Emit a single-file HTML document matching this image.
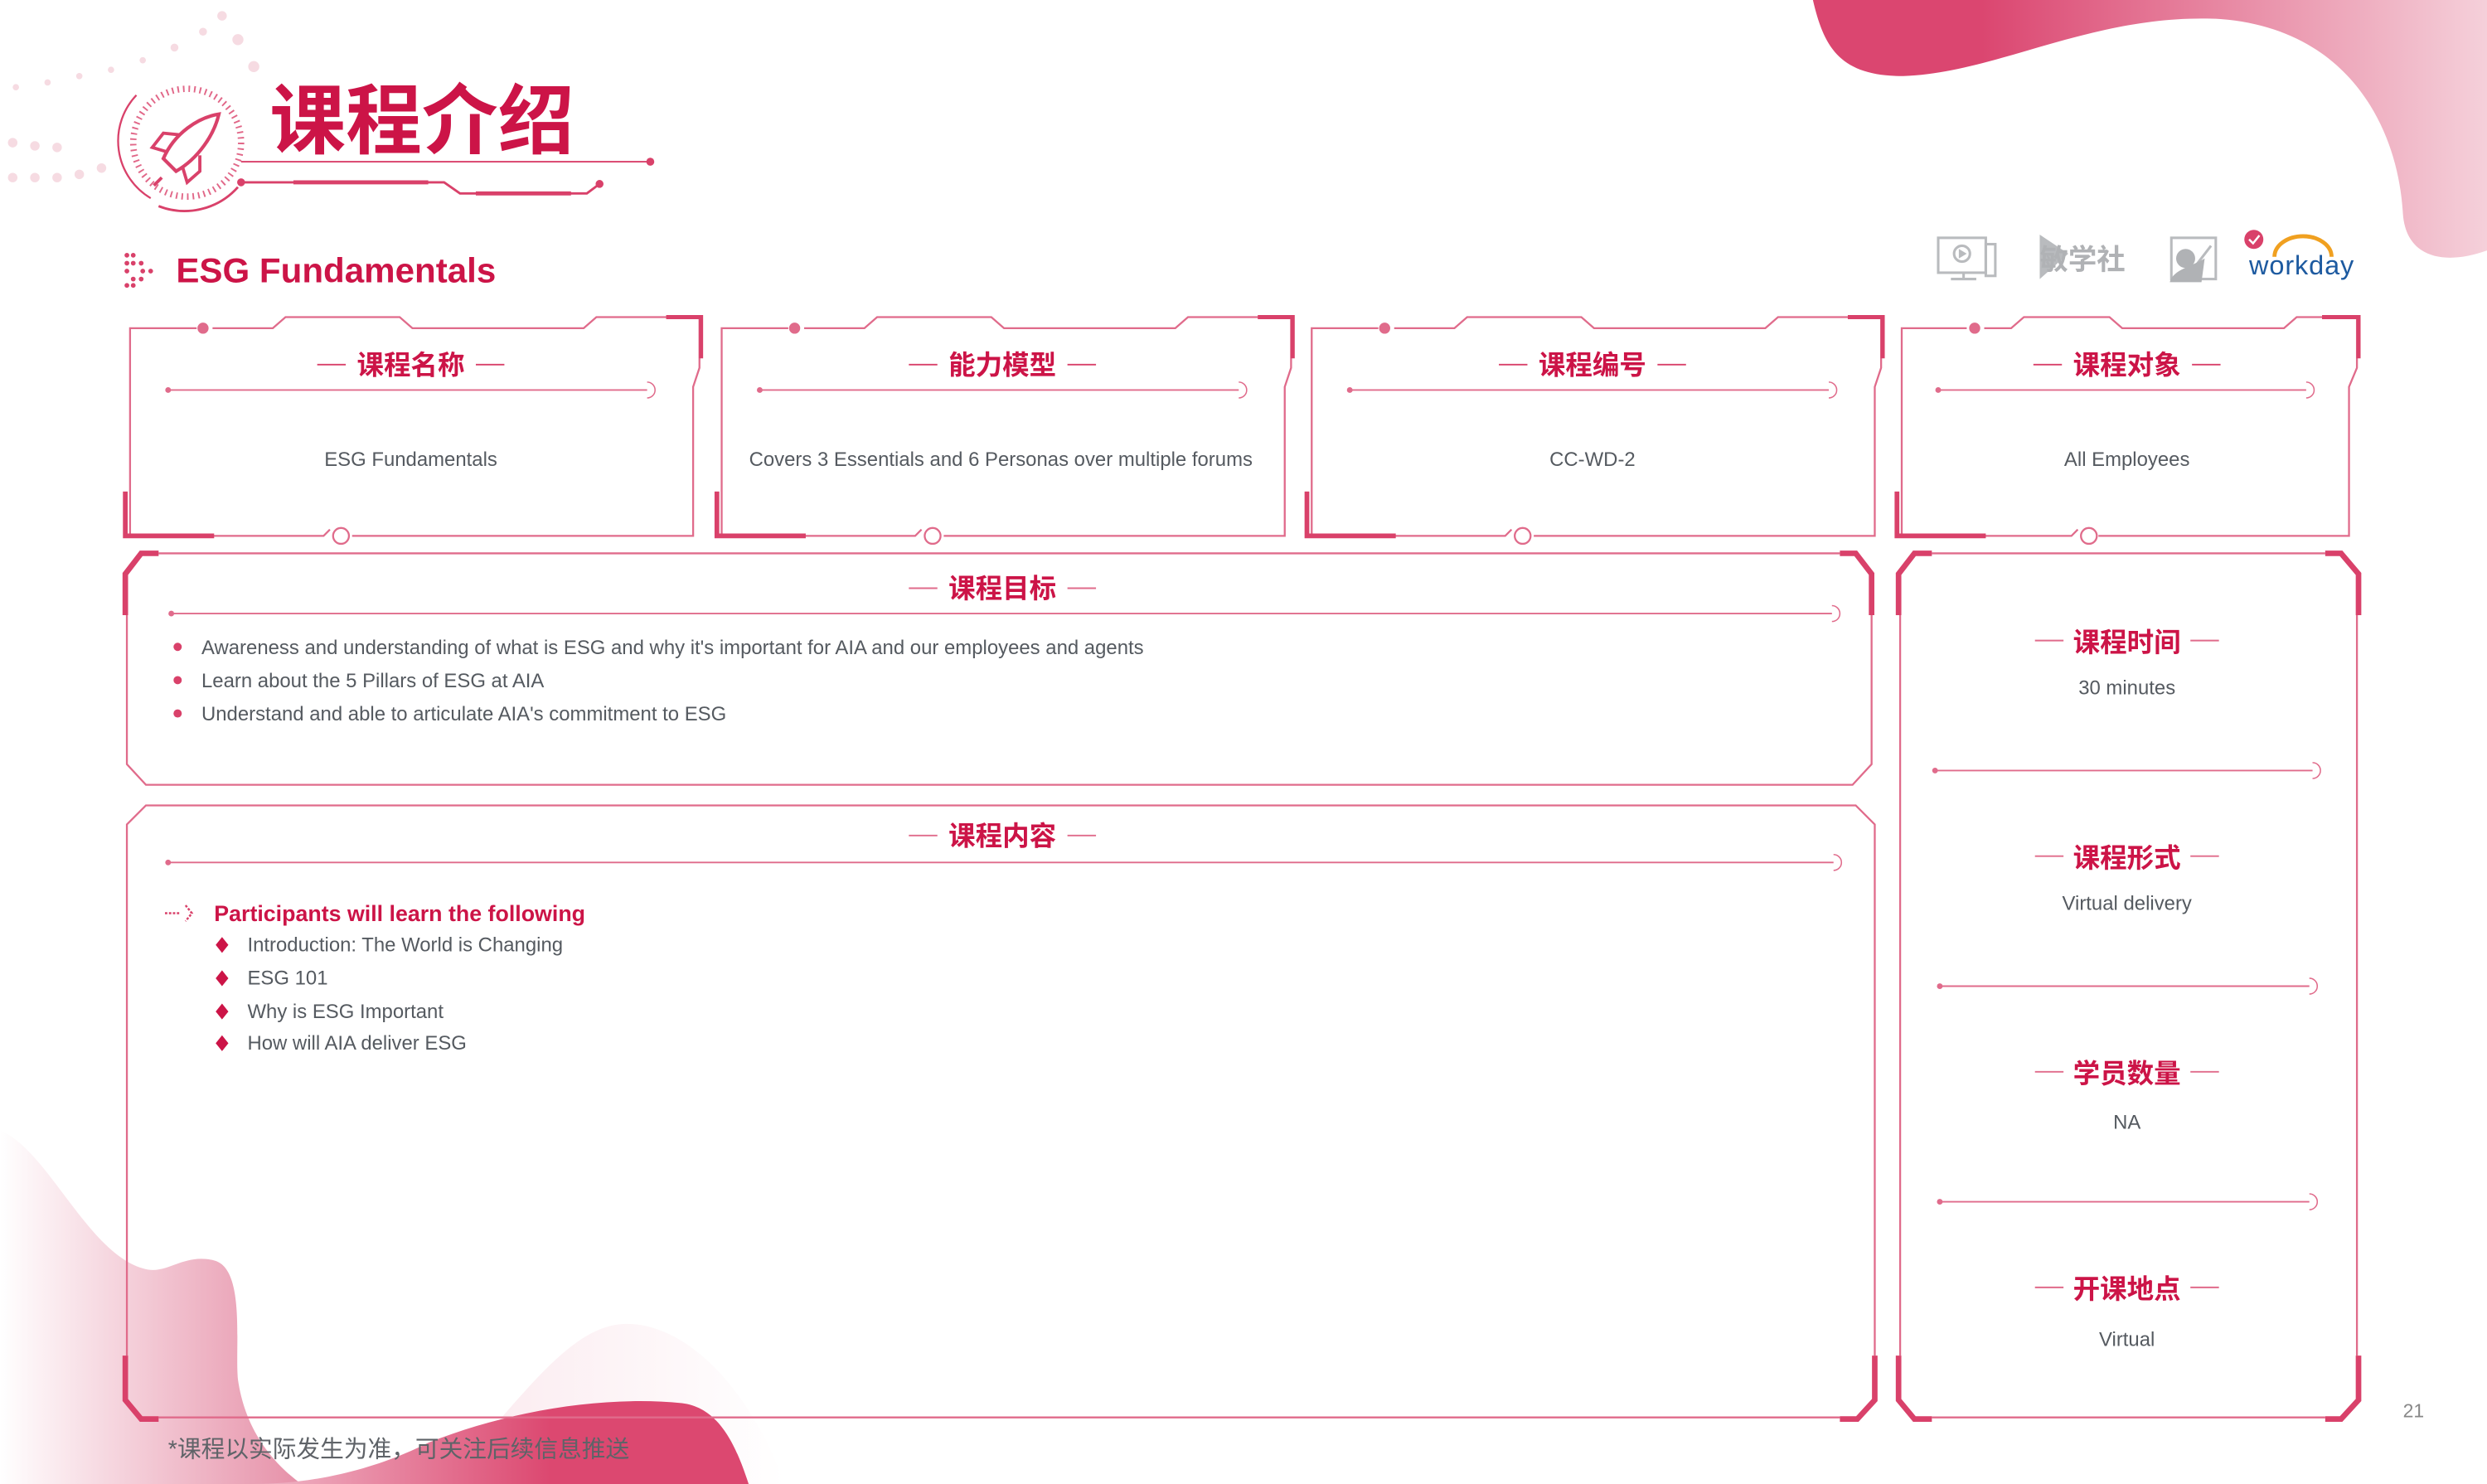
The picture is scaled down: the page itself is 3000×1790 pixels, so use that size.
<!DOCTYPE html>
<html><head><meta charset="utf-8"><style>
html,body{margin:0;padding:0;background:#fff;}
svg{display:block}
.cn{font-family:"Liberation Sans","Noto Sans CJK SC",sans-serif;font-weight:bold;fill:#cc1447}
.tx{font-family:"Liberation Sans","Noto Sans CJK SC",sans-serif;fill:#555a60}
</style></head><body>
<svg width="3000" height="1790" viewBox="0 0 1568 936" preserveAspectRatio="none" xmlns="http://www.w3.org/2000/svg">
<defs>
<linearGradient id="gtr" x1="0" x2="1" y1="0" y2="0"><stop offset="0.25" stop-color="#db4670"/><stop offset="1" stop-color="#f5d0da"/></linearGradient>
<linearGradient id="gbl" x1="0" x2="1" y1="0" y2="0"><stop offset="0" stop-color="#fff"/><stop offset="1" stop-color="#e690a8"/></linearGradient>
<linearGradient id="gbr" x1="0" x2="1" y1="0" y2="0"><stop offset="0" stop-color="#f0b8c8"/><stop offset="0.6" stop-color="#dc4870"/></linearGradient>
<linearGradient id="gfaint" x1="0" x2="1"><stop offset="0" stop-color="#fbe9ee"/><stop offset="1" stop-color="#fff"/></linearGradient>
</defs>
<path d="M1143,0 C1150,30 1160,48 1200,48 C1260,46 1320,8 1400,12 C1480,18 1512,80 1515,135 C1517,162 1540,168 1568,158 L1568,0 Z" fill="url(#gtr)"/>
<path d="M280,936 C330,880 360,835 395,835 C430,835 470,870 495,936 Z" fill="url(#gfaint)"/>
<path d="M0,713 C30,725 55,790 90,800 C105,805 115,790 135,795 C155,800 148,850 150,870 C155,905 175,925 190,936 L0,936 Z" fill="url(#gbl)"/>
<path d="M160,936 C190,936 230,930 270,910 C320,890 380,880 430,885 C455,888 465,915 472,936 Z" fill="url(#gbr)"/>
<g fill="#f6dbe2">
<circle cx="140" cy="10" r="3"/><circle cx="150" cy="25" r="3.5"/><circle cx="160" cy="42" r="3.5"/><circle cx="128" cy="20" r="2.5"/><circle cx="110" cy="30" r="2.5"/><circle cx="90" cy="38" r="2"/><circle cx="70" cy="44" r="2"/><circle cx="50" cy="48" r="2"/><circle cx="30" cy="52" r="2"/><circle cx="10" cy="55" r="2"/><circle cx="8" cy="90" r="3"/><circle cx="22" cy="92" r="3"/><circle cx="36" cy="93" r="3"/><circle cx="8" cy="112" r="3"/><circle cx="22" cy="112" r="3"/><circle cx="36" cy="112" r="3"/><circle cx="50" cy="110" r="3"/><circle cx="64" cy="106" r="3"/>
</g>
<g fill="none" stroke="#d9416a">
<circle cx="118" cy="90" r="34" stroke-width="4" stroke-dasharray="1 2.5" opacity="0.8"/>
<path d="M95,125 A42,42 0 0 1 86,60" stroke-width="1.2"/>
<path d="M100,130 A45,45 0 0 0 150,118" stroke-width="1.5"/>
<path d="M103,100 L111,108 C125,100 135,85 138,72 C125,74 110,84 103,100 Z" stroke-width="2.2"/>
<path d="M106,96 L96,93 L103,84 L113,85" stroke-width="2"/>
<path d="M115,105 L118,115 L126,108 L126,98" stroke-width="2"/>
<path d="M102,112 L97,117" stroke-width="2"/>
</g>
<text x="170" y="93" class="cn" font-size="48">课程介绍</text>
<path d="M152,102 L410,102" stroke="#d9416a" stroke-width="1" fill="none"/><circle cx="410" cy="102" r="2.5" fill="#d9416a"/>
<path d="M152,115 L280,115 L290,122 L370,122 L378,116" stroke="#d9416a" stroke-width="1.5" fill="none"/><circle cx="152" cy="115" r="2.5" fill="#d9416a"/><circle cx="378" cy="116" r="2.5" fill="#d9416a"/>
<path d="M185,115 L270,115 M300,122 L360,122" stroke="#d9416a" stroke-width="2.5"/>
<g fill="#d9416a"><circle cx="80" cy="161" r="1.5"/><circle cx="84" cy="161" r="1.5"/><circle cx="84" cy="166" r="1.5"/><circle cx="89" cy="166" r="1.5"/><circle cx="90" cy="171" r="1.5"/><circle cx="95" cy="171" r="1.5"/><circle cx="84" cy="176" r="1.5"/><circle cx="89" cy="176" r="1.5"/><circle cx="80" cy="180" r="1.5"/><circle cx="84" cy="180" r="1.5"/><circle cx="80" cy="171" r="1.5"/><circle cx="80" cy="166" r="1.5"/></g>
<text x="111" y="178" class="cn" font-size="22">ESG Fundamentals</text>
<g fill="none" stroke="#b9bbbe" stroke-width="1.6">
<rect x="1222" y="150" width="30" height="22"/><rect x="1252" y="154" width="6" height="20"/><circle cx="1237" cy="160" r="5"/><path d="M1230,176 L1246,176 M1238,172 L1238,176"/>
<rect x="1369" y="150" width="28" height="26"/><path d="M1384,168 L1394,155"/>
</g>
<path d="M1235,157 L1240,160 L1235,163 Z" fill="#b9bbbe"/>
<path d="M1286,148 L1304,160 L1286,176 Z" fill="#b9bbbe"/>
<text x="1286" y="170" font-family="Liberation Sans,Noto Sans CJK SC,sans-serif" font-weight="bold" font-size="18" fill="#b0b2b5">敏学社</text>
<circle cx="1378" cy="163" r="6" fill="#b0b2b5"/><path d="M1368,178 C1370,170 1382,168 1390,163 L1388,178 Z" fill="#b0b2b5"/>
<circle cx="1421" cy="151" r="6" fill="#d9416a"/><path d="M1418,151 L1420.5,153.5 L1424.5,148.5" stroke="#fff" stroke-width="1.3" fill="none"/>
<path d="M1434,162 A18,13 0 0 1 1470,162" stroke="#f0a020" stroke-width="2.5" fill="none"/>
<text x="1418" y="173" font-family="Liberation Sans,sans-serif" font-size="17" fill="#1d5aa0" textLength="66">workday</text>
<g id="card">
<path d="M82,338 L82,207 L124,207 M134,207 L172,207 L180,200 L252,200 L260,207 L368,207 L376,200 L441,200 L441,232 L437,244 L437,338 L222,338 M208,334 L204,338 L82,338" fill="none" stroke="#e06b8b" stroke-width="1.2"/>
<circle cx="128" cy="207" r="3.5" fill="#e06b8b"/>
<circle cx="215" cy="338" r="5" fill="#fff" stroke="#e06b8b" stroke-width="1.2"/>
<path d="M79,310 L79,338 L135,338" fill="none" stroke="#d9416a" stroke-width="3"/>
<path d="M420,200 L442,200 L442,226" fill="none" stroke="#d9416a" stroke-width="2.6"/>
<path d="M200,230 L218,230 M300,230 L318,230" stroke="#d9416a" stroke-width="1"/>
<path d="M106,246 L408,246" stroke="#e06b8b" stroke-width="1"/><circle cx="106" cy="246" r="1.8" fill="#e06b8b"/>
<path d="M408,241 A5,5 0 1 1 408,251" fill="none" stroke="#e06b8b" stroke-width="0.8"/>
</g>
<use href="#card" x="373"/><use href="#card" x="745"/>
<!-- card 4 (narrower) -->
<g>
<path d="M1199,338 L1199,207 L1240,207 M1251,207 L1268,207 L1276,200 L1330,200 L1338,207 L1440,207 L1448,200 L1486,200 L1486,232 L1481,244 L1481,338 L1323,338 M1310,334 L1306,338 L1199,338" fill="none" stroke="#e06b8b" stroke-width="1.2"/>
<circle cx="1245" cy="207" r="3.5" fill="#e06b8b"/>
<circle cx="1317" cy="338" r="5" fill="#fff" stroke="#e06b8b" stroke-width="1.2"/>
<path d="M1196,310 L1196,338 L1252,338" fill="none" stroke="#d9416a" stroke-width="3"/>
<path d="M1464,200 L1487,200 L1487,226" fill="none" stroke="#d9416a" stroke-width="2.6"/>
<path d="M1282,230 L1300,230 M1382,230 L1400,230" stroke="#d9416a" stroke-width="1"/>
<path d="M1222,246 L1454,246" stroke="#e06b8b" stroke-width="1"/><circle cx="1222" cy="246" r="1.8" fill="#e06b8b"/>
<path d="M1454,241 A5,5 0 1 1 1454,251" fill="none" stroke="#e06b8b" stroke-width="0.8"/>
</g>
<g text-anchor="middle">
<text x="259" y="236" class="cn" font-size="17">课程名称</text>
<text x="632" y="236" class="cn" font-size="17">能力模型</text>
<text x="1004" y="236" class="cn" font-size="17">课程编号</text>
<text x="1341" y="236" class="cn" font-size="17">课程对象</text>
<text x="259" y="294" class="tx" font-size="12.5">ESG Fundamentals</text>
<text x="631" y="294" class="tx" font-size="12.5">Covers 3 Essentials and 6 Personas over multiple forums</text>
<text x="1004" y="294" class="tx" font-size="12.5">CC-WD-2</text>
<text x="1341" y="294" class="tx" font-size="12.5">All Employees</text>
</g>
<g fill="none" stroke="#e06b8b" stroke-width="1.2">
<path d="M100,349 L1160,349 M80,388 L80,482 L92,495 L1168,495 L1180,482 L1180,388"/>
<path d="M80,855 L80,520 L92,508 L1170,508 L1182,520 L1182,855 M100,894 L1160,894"/>
<path d="M1218,349 L1466,349 M1198,388 L1198,855 M1486,388 L1486,855 M1218,894 L1466,894"/>
</g>
<g fill="none" stroke="#d9416a" stroke-width="3.5">
<path d="M79,388 L79,362 L89,349 L100,349"/><path d="M1160,349 L1170,349 L1180,362 L1180,388"/>
<path d="M79,855 L79,883 L89,895 L100,895"/><path d="M1160,895 L1171,895 L1182,883 L1182,855"/>
<path d="M1197,388 L1197,362 L1207,349 L1218,349"/><path d="M1466,349 L1476,349 L1487,362 L1487,388"/>
<path d="M1197,855 L1197,883 L1207,895 L1218,895"/><path d="M1466,895 L1476,895 L1487,883 L1487,855"/>
</g>
<g stroke="#e06b8b" stroke-width="1" fill="none">
<path d="M108,387 L1155,387"/><path d="M1155,382 A5,5 0 1 1 1155,392" stroke-width="0.8"/>
<path d="M106,544 L1156,544"/><path d="M1156,539 A5,5 0 1 1 1156,549" stroke-width="0.8"/>
<path d="M1220,486 L1458,486"/><path d="M1458,481 A5,5 0 1 1 1458,491" stroke-width="0.8"/>
<path d="M1223,622 L1456,622"/><path d="M1456,617 A5,5 0 1 1 1456,627" stroke-width="0.8"/>
<path d="M1223,758 L1456,758"/><path d="M1456,753 A5,5 0 1 1 1456,763" stroke-width="0.8"/>
<path d="M573,371 L591,371 M673,371 L691,371 M573,527 L591,527 M673,527 L691,527"/>
<path d="M1283,404 L1301,404 M1381,404 L1399,404 M1283,540 L1301,540 M1381,540 L1399,540 M1283,676 L1301,676 M1381,676 L1399,676 M1283,812 L1301,812 M1381,812 L1399,812"/>
</g>
<g fill="#e06b8b"><circle cx="108" cy="387" r="1.8"/><circle cx="106" cy="544" r="1.8"/><circle cx="1220" cy="486" r="1.8"/><circle cx="1223" cy="622" r="1.8"/><circle cx="1223" cy="758" r="1.8"/></g>
<g text-anchor="middle">
<text x="632" y="377" class="cn" font-size="17">课程目标</text>
<text x="632" y="533" class="cn" font-size="17">课程内容</text>
<text x="1341" y="411" class="cn" font-size="17">课程时间</text>
<text x="1341" y="547" class="cn" font-size="17">课程形式</text>
<text x="1341" y="683" class="cn" font-size="17">学员数量</text>
<text x="1341" y="819" class="cn" font-size="17">开课地点</text>
<text x="1341" y="438" class="tx" font-size="12.5">30 minutes</text>
<text x="1341" y="574" class="tx" font-size="12.5">Virtual delivery</text>
<text x="1341" y="712" class="tx" font-size="12.5">NA</text>
<text x="1341" y="849" class="tx" font-size="12.5">Virtual</text>
</g>
<g fill="#d9416a"><circle cx="112" cy="408" r="2.6"/><circle cx="112" cy="429" r="2.6"/><circle cx="112" cy="450" r="2.6"/></g>
<text x="127" y="412.5" class="tx" font-size="12.5">Awareness and understanding of what is ESG and why it's important for AIA and our employees and agents</text>
<text x="127" y="433.5" class="tx" font-size="12.5">Learn about the 5 Pillars of ESG at AIA</text>
<text x="127" y="454.5" class="tx" font-size="12.5">Understand and able to articulate AIA's commitment to ESG</text>
<path d="M104,576 L114,576 M117,571 L121,576 L117,581" stroke="#d9416a" stroke-width="1.3" fill="none" stroke-dasharray="1.5 1"/>
<text x="135" y="581" class="cn" font-size="14">Participants will learn the following</text>
<g fill="#cc1447"><path d="M140,591 L144,596 L140,601 L136,596 Z"/><path d="M140,612 L144,617 L140,622 L136,617 Z"/><path d="M140,633 L144,638 L140,643 L136,638 Z"/><path d="M140,653 L144,658 L140,663 L136,658 Z"/></g>
<text x="156" y="600" class="tx" font-size="12.5">Introduction: The World is Changing</text>
<text x="156" y="621" class="tx" font-size="12.5">ESG 101</text>
<text x="156" y="642" class="tx" font-size="12.5">Why is ESG Important</text>
<text x="156" y="662" class="tx" font-size="12.5">How will AIA deliver ESG</text>
<text x="1515" y="894" font-family="Liberation Sans,sans-serif" font-size="12" fill="#888">21</text>
<text x="106" y="919" font-family="Liberation Sans,Noto Sans CJK SC,sans-serif" font-size="15" fill="#5f6368">*课程以实际发生为准，可关注后续信息推送</text>
</svg>
</body></html>
